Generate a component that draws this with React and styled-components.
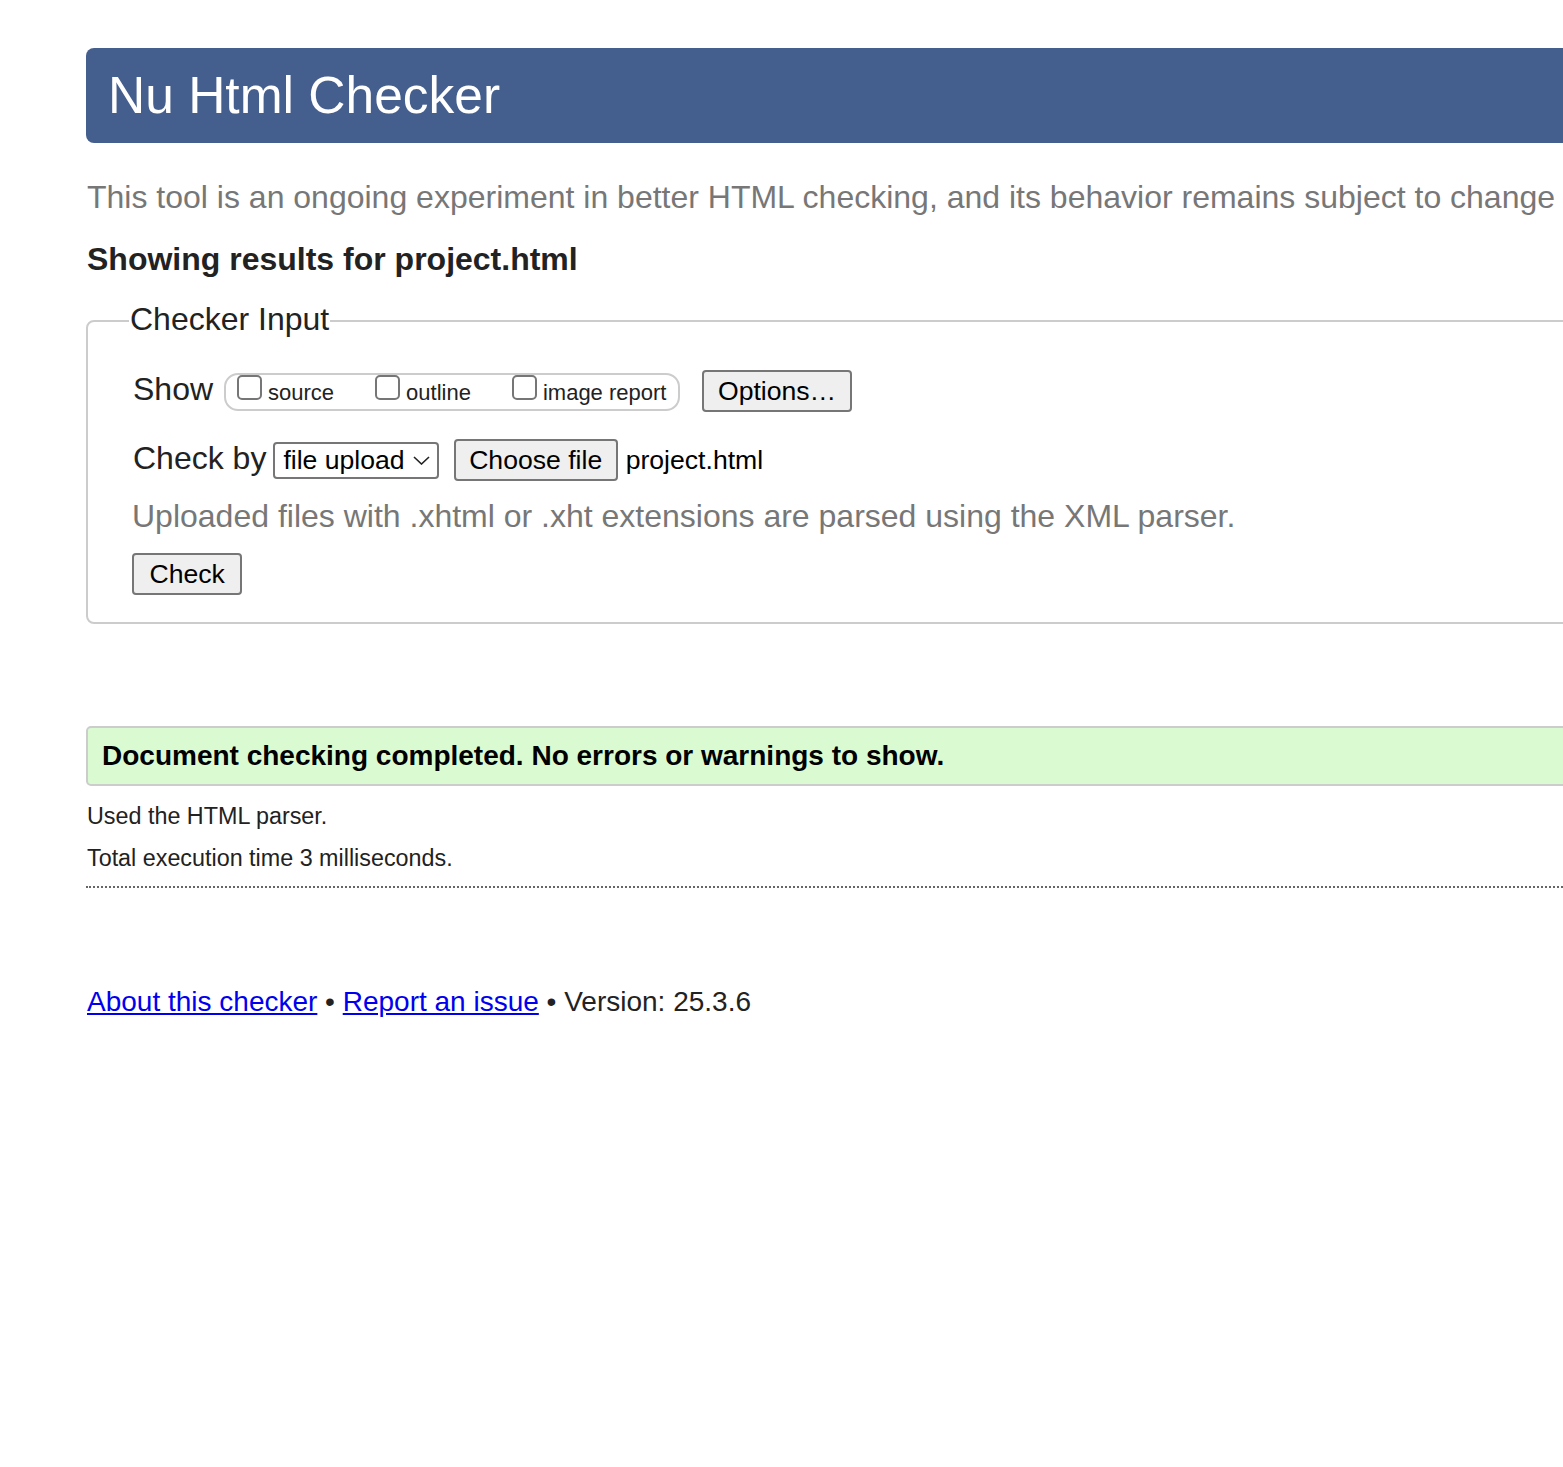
import React from "react";
import styled, { createGlobalStyle } from "styled-components";

const GlobalStyle = createGlobalStyle`
  html, body {
    margin: 0;
    padding: 0;
    background: #fff;
    overflow-x: hidden;
  }
  body {
    font-family: "Liberation Sans", Arial, Helvetica, sans-serif;
    color: #222;
  }
`;

// page frame, wider than the window like the original

const Page = styled.div`
  width: 1800px;
  padding: 48px 0 60px 86px;
`;

const Header = styled.h1`
  margin: 0;
  height: 95px;
  padding: 0 22px;
  background: #445e8e;
  color: #fff;
  border-radius: 8px;
  font-size: 51.5px;
  font-weight: normal;
  line-height: 95px;
`;

const Intro = styled.p`
  margin: 36px 0 0 1px;
  font-size: 32px;
  line-height: 36px;
  color: #777;
  white-space: nowrap;
`;

const ResultsTitle = styled.h2`
  margin: 26px 0 0 1px;
  font-size: 32px;
  font-weight: bold;
  line-height: 36px;
`;

// checker input form

const Fieldset = styled.fieldset`
  margin: 23px 0 0;
  padding: 0 0 27px 44px;
  border: 2px solid #ccc;
  border-radius: 8px;
  min-width: 0;
`;

const Legend = styled.legend`
  margin-left: -3px;
  padding: 1px 1px 4px;
  font-size: 32px;
  line-height: 36px;
`;

const Row = styled.div`
  display: flex;
  align-items: baseline;
  margin-top: ${(p) => p.$top}px;
`;

const RowLabel = styled.span`
  font-size: 32px;
  line-height: 36px;
  margin-left: 1px;
  margin-right: ${(p) => p.$gap}px;
`;

const ShowBox = styled.div`
  display: flex;
  align-items: flex-start;
  gap: 41px;
  box-sizing: border-box;
  height: 38px;
  padding: 0 12px 0 11px;
  border: 2px solid #ccc;
  border-radius: 14px;
`;

const Option = styled.label`
  display: inline-flex;
  align-items: baseline;
  gap: 6px;
  font-size: 22px;
  line-height: 26px;
`;

const Checkbox = styled.input.attrs({ type: "checkbox" })`
  appearance: none;
  -webkit-appearance: none;
  margin: 0;
  width: 25px;
  height: 25px;
  box-sizing: border-box;
  border: 2px solid #767676;
  border-radius: 5px;
  background: #fff;
`;

const Button = styled.button`
  box-sizing: border-box;
  height: 42px;
  padding: 0 ${(p) => p.$pad || 13.5}px;
  margin-left: ${(p) => p.$gap || 0}px;
  border: 2px solid #767676;
  border-radius: 4px;
  background: #efefef;
  color: #000;
  font-family: inherit;
  font-size: 26.6px;
  line-height: 30px;
`;

const SelectBox = styled.span`
  display: inline-flex;
  align-items: baseline;
  gap: 8px;
  box-sizing: border-box;
  height: 37px;
  padding: 1.5px 7px 0 8px;
  border: 2px solid #767676;
  border-radius: 4px;
  background: #fff;
  color: #000;
  font-size: 26.6px;
  line-height: 30px;
`;

const Chevron = styled.svg`
  width: 17px;
  height: 9px;
  align-self: center;
`;

const FileName = styled.span`
  margin-left: 8px;
  font-size: 26.6px;
  line-height: 30px;
  color: #000;
`;

const Hint = styled.p`
  margin: 17px 0 0;
  font-size: 32px;
  line-height: 36px;
  color: #777;
`;

const CheckWrap = styled.div`
  margin-top: 19px;
`;

// results

const Success = styled.p`
  margin: 102px 0 16px;
  padding: 10px 14px 10px;
  background: #dafbd1;
  border: 2px solid #ccc;
  border-radius: 5px;
  font-size: 28px;
  font-weight: bold;
  line-height: 36px;
  color: #000;
`;

const Detail = styled.p`
  margin: 14px 0 13.5px 1px;
  font-size: 23.33px;
  line-height: 28px;
`;

const Divider = styled.hr`
  margin: 14px 0 0;
  border: 0;
  border-top: 2px dotted #666;
  height: 0;
`;

const Footer = styled.p`
  margin: 98px 0 0 1px;
  font-size: 28px;
  line-height: 32px;
`;

const FooterLink = styled.a`
  color: #0000ee;
  text-decoration: underline;
`;

const App = () => {
  return (
    <>
      <GlobalStyle />
      <Page>
        <Header>Nu Html Checker</Header>
        <Intro>
          This tool is an ongoing experiment in better HTML checking, and its
          behavior remains subject to change
        </Intro>
        <ResultsTitle>Showing results for project.html</ResultsTitle>

        <Fieldset>
          <Legend>Checker Input</Legend>

          <Row $top={29}>
            <RowLabel $gap={11}>Show</RowLabel>
            <ShowBox>
              <Option>
                <Checkbox />
                source
              </Option>
              <Option>
                <Checkbox />
                outline
              </Option>
              <Option>
                <Checkbox />
                image report
              </Option>
            </ShowBox>
            <Button $gap={22}>Options…</Button>
          </Row>

          <Row $top={27}>
            <RowLabel $gap={7}>Check by</RowLabel>
            <SelectBox role="combobox">
              file upload
              <Chevron viewBox="0 0 17 9">
                <path
                  d="M1 1 L8.5 8 L16 1"
                  fill="none"
                  stroke="#222"
                  strokeWidth="1.6"
                />
              </Chevron>
            </SelectBox>
            <Button $gap={15}>Choose file</Button>
            <FileName>project.html</FileName>
          </Row>

          <Hint>
            Uploaded files with .xhtml or .xht extensions are parsed using the
            XML parser.
          </Hint>

          <CheckWrap>
            <Button $pad={15.5}>Check</Button>
          </CheckWrap>
        </Fieldset>

        <Success>
          Document checking completed. No errors or warnings to show.
        </Success>
        <Detail>Used the HTML parser.</Detail>
        <Detail>Total execution time 3 milliseconds.</Detail>
        <Divider />

        <Footer>
          <FooterLink href="#about">About this checker</FooterLink> •{" "}
          <FooterLink href="#issue">Report an issue</FooterLink> • Version:
          25.3.6
        </Footer>
      </Page>
    </>
  );
};

export default App;
